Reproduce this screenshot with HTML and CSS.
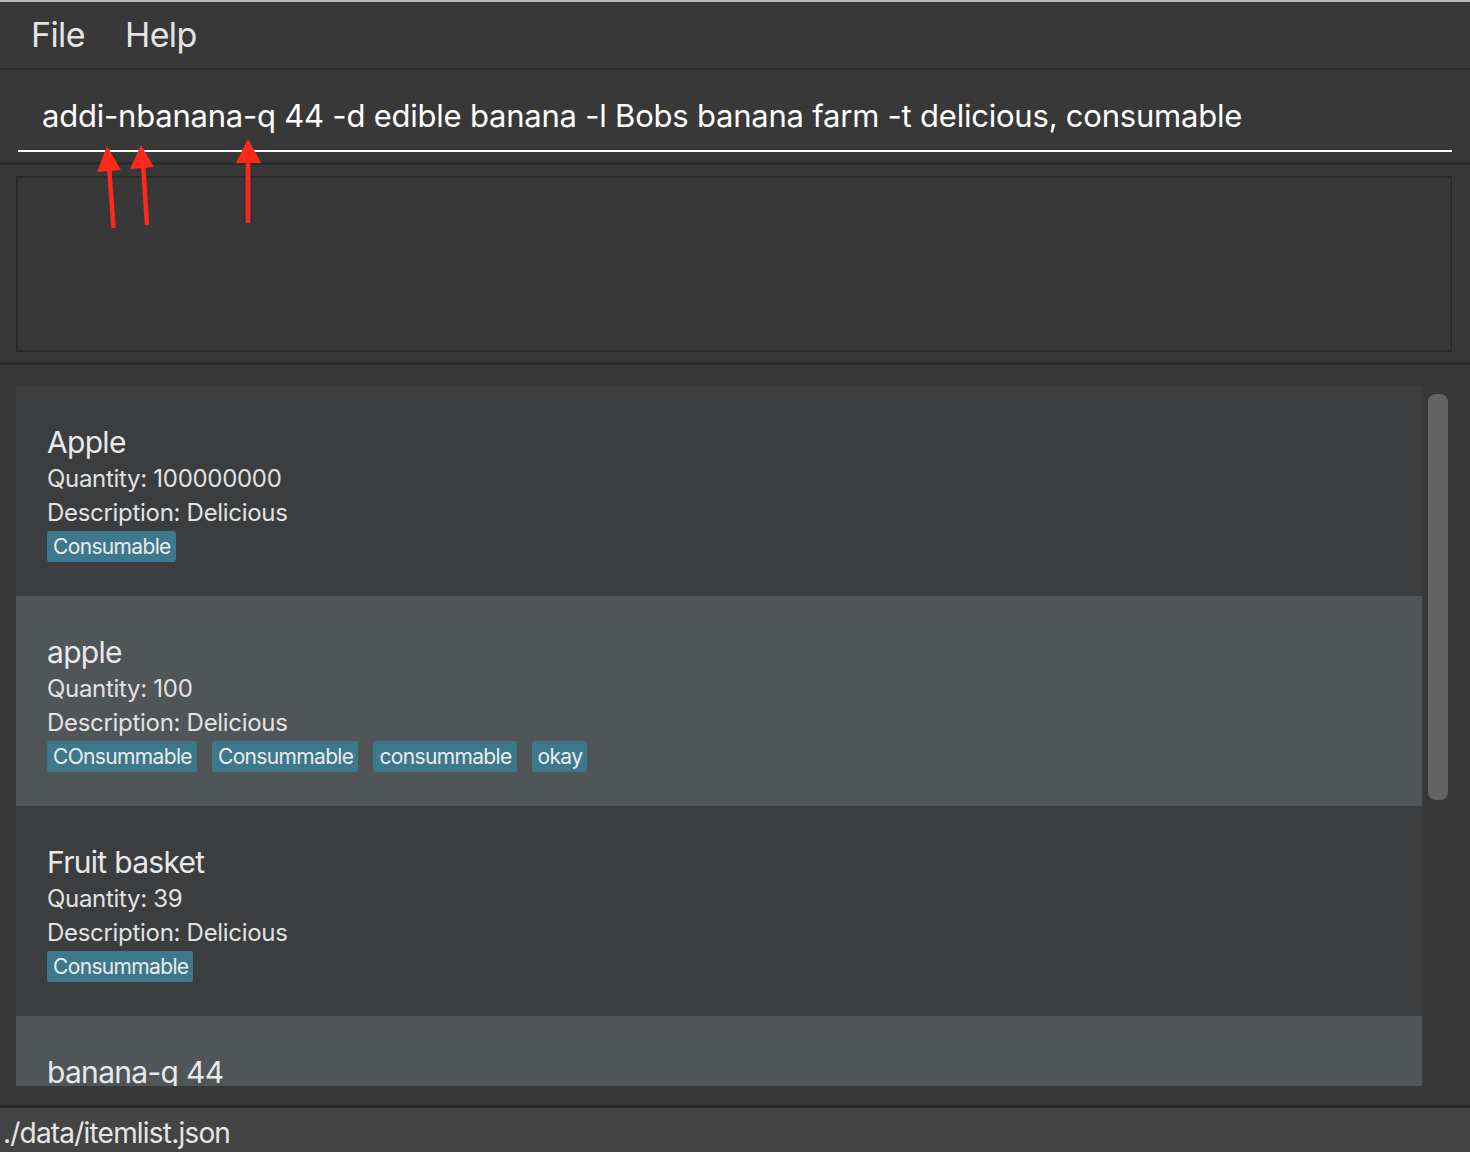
FILE: index.html
```html
<!DOCTYPE html>
<html>
<head>
<meta charset="utf-8">
<link rel="stylesheet" href="styles.css">
</head>
<body>
<div class="app">
  <div class="topline"></div>
  <div class="menubar">
    <span class="menu-item">File</span>
    <span class="menu-item">Help</span>
  </div>
  <div class="sep sep-thin"></div>
  <div class="command">
    <div class="command-input">addi-nbanana-q 44 -d edible banana -l Bobs banana farm -t delicious, consumable</div>
  </div>
  <div class="sep"></div>
  <div class="result-wrap">
    <div class="result-box"></div>
  </div>
  <div class="sep"></div>
  <div class="list-wrap">
    <div class="list">
      <div class="cell odd">
        <div class="name">Apple</div>
        <div class="detail">Quantity: 100000000</div>
        <div class="detail">Description: Delicious</div>
        <div class="tags"><span class="tag">Consumable</span></div>
      </div>
      <div class="cell even">
        <div class="name">apple</div>
        <div class="detail">Quantity: 100</div>
        <div class="detail">Description: Delicious</div>
        <div class="tags"><span class="tag">COnsummable</span><span class="tag">Consummable</span><span class="tag">consummable</span><span class="tag">okay</span></div>
      </div>
      <div class="cell odd">
        <div class="name">Fruit basket</div>
        <div class="detail">Quantity: 39</div>
        <div class="detail">Description: Delicious</div>
        <div class="tags"><span class="tag">Consummable</span></div>
      </div>
      <div class="cell even cell-last">
        <div class="name">banana-q 44</div>
      </div>
    </div>
    <div class="scroll-track"><div class="scroll-thumb"></div></div>
  </div>
  <div class="sep"></div>
  <div class="status">./data/itemlist.json</div>

  <svg class="arrows" width="1470" height="1152" viewBox="0 0 1470 1152">
    <g fill="#fd2a1c" stroke="#fd2a1c">
      <line x1="113.5" y1="228" x2="109" y2="165" stroke-width="4.5"/>
      <polygon points="107,146 97,172 121,170" stroke="none"/>
      <line x1="147" y1="225" x2="143" y2="163" stroke-width="4.5"/>
      <polygon points="141,145 130,169 154,167" stroke="none"/>
      <line x1="248" y1="223" x2="248" y2="158" stroke-width="4.5"/>
      <polygon points="248,139 236,163 261,163" stroke="none"/>
    </g>
  </svg>
</div>
</body>
</html>
```

FILE: styles.css
```css
* { box-sizing: border-box; }
html, body {
  margin: 0;
  padding: 0;
  background: #383838;
  font-family: Inter, "Noto Sans", "Liberation Sans", sans-serif;
}
.app {
  position: relative;
  width: 1470px;
  height: 1152px;
  overflow: hidden;
  display: flex;
  flex-direction: column;
  background: #383838;
}
.topline {
  height: 2px;
  background: #b7b7b7;
  flex: none;
}
.menubar {
  height: 66px;
  flex: none;
  display: flex;
  align-items: center;
  gap: 40px;
  padding-left: 31px;
  padding-bottom: 2px;
}
.menu-item {
  font-size: 34px;
  color: #e4e4e4;
  letter-spacing: -0.6px;
}
.sep {
  height: 3px;
  flex: none;
  background: #2b2b2b;
}
.sep-thin { height: 2px; }
.command {
  height: 92px;
  flex: none;
  padding: 0 18px;
}
.command-input {
  height: 82px;
  border-bottom: 2px solid #ffffff;
  color: #ffffff;
  font-size: 31px;
  letter-spacing: -0.22px;
  padding-left: 24px;
  padding-top: 26px;
  line-height: 40px;
  white-space: nowrap;
}
.result-wrap {
  height: 197px;
  flex: none;
  padding: 11px 18px 10px 16px;
}
.result-box {
  height: 100%;
  border: 2px solid #2a2a2a;
  background: #383838;
}
.list-wrap {
  height: 740px;
  flex: none;
  display: flex;
  padding-top: 21px;
  overflow: hidden;
}
.list {
  margin-left: 16px;
  width: 1406px;
  flex: none;
  display: flex;
  flex-direction: column;
  height: 700px;
  overflow: hidden;
}
.cell {
  height: 210px;
  flex: none;
  padding: 36px 0 0 31px;
}
.cell-last { height: 70px; }
.odd { background: #3c3d3f; }
.even { background: #505557; }
.name {
  font-size: 30px;
  line-height: 40px;
  color: #e9e9e9;
  letter-spacing: -0.7px;
}
.detail {
  font-size: 24px;
  line-height: 34px;
  color: #e2e2e2;
  letter-spacing: -0.3px;
}
.tags {
  display: flex;
  gap: 15px;
  margin-top: 1px;
}
.tag {
  background: #3e788c;
  color: #ebebeb;
  border-radius: 3px;
  font-size: 21px;
  line-height: 31px;
  height: 31px;
  padding: 0 5px 0 6px;
  letter-spacing: -0.65px;
}
.scroll-track {
  width: 48px;
  flex: none;
  padding: 8px 0 0 6px;
}
.scroll-thumb {
  width: 20px;
  height: 406px;
  background: #636363;
  border-radius: 8px;
}
.status {
  flex: 1;
  background: #444444;
  color: #e6e6e6;
  font-size: 28px;
  letter-spacing: -0.8px;
  padding-left: 3px;
  padding-top: 5px;
  line-height: 40px;
  overflow: hidden;
}
.arrows {
  position: absolute;
  left: 0;
  top: 0;
  pointer-events: none;
}
```
